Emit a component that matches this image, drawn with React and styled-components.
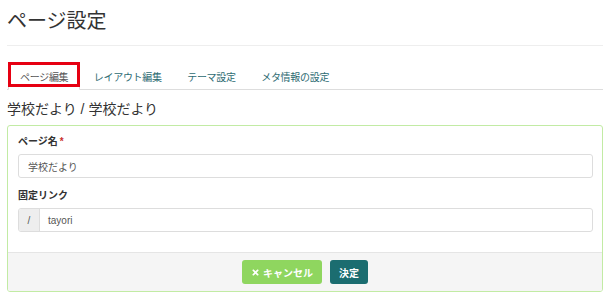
import React from "react";
import styled, { createGlobalStyle } from "styled-components";
import { FaTimes } from "react-icons/fa";

const GlobalStyle = createGlobalStyle`
  html, body {
    margin: 0;
    padding: 0;
    background: #fff;
  }
  body {
    font-family: "Liberation Sans", "Noto Sans CJK JP", sans-serif;
    color: #333;
  }
`;

const Page = styled.div`
  padding: 0 7px;
  width: 596px;
`;

const Title = styled.h1`
  margin: 10px 0 0;
  font-size: 20px;
  line-height: 22px;
  font-weight: 400;
  color: #333;
`;

const Divider = styled.hr`
  margin: 13px 0 0;
  border: 0;
  border-top: 1px solid #eee;
`;

const Tabs = styled.ul`
  display: flex;
  list-style: none;
  margin: 16px 0 0;
  padding: 0 3px 0 1px;
  height: 27px;
  border-bottom: 1px solid #ddd;
`;

const Tab = styled.li`
  position: relative;
  display: flex;
  align-items: center;
  height: 28px;
  padding: 0 10.5px 0 11px;
  margin: 0 2px -1px 0;
  font-size: 10px;
  letter-spacing: -0.3px;
  color: ${(p) => (p.active ? "#555" : "#2d6b72")};
  background: ${(p) => (p.active ? "#fff" : "transparent")};
  border: 1px solid ${(p) => (p.active ? "#ddd" : "transparent")};
  border-bottom-color: transparent;
  border-radius: 3px 3px 0 0;
  box-sizing: border-box;
  white-space: nowrap;
`;

const Marker = styled.span`
  position: absolute;
  left: -1px;
  top: -1px;
  right: -1px;
  height: 25px;
  border: 3px solid #e60012;
  box-sizing: border-box;
`;

const Heading = styled.h2`
  margin: 9px 0 0;
  font-size: 14px;
  line-height: 20px;
  font-weight: 400;
  color: #333;
`;

const Panel = styled.div`
  margin-top: 6px;
  border: 1px solid #c2eba4;
  border-radius: 3px;
  overflow: hidden;
`;

const PanelBody = styled.div`
  padding: 9px 9px 20px 10px;
`;

const Group = styled.div`
  & + & {
    margin-top: 11px;
  }
`;

const Label = styled.label`
  display: block;
  font-size: 10px;
  line-height: 14px;
  font-weight: 700;
  color: #333;
  margin-bottom: 5px;
`;

const Required = styled.span`
  color: #c9302c;
  margin-left: 2px;
`;

const InputRow = styled.div`
  display: flex;
  height: 24px;
  border: 1px solid #ddd;
  border-radius: 3px;
  box-sizing: border-box;
  overflow: hidden;
  background: #fff;
`;

const Addon = styled.span`
  display: flex;
  align-items: center;
  justify-content: center;
  width: 20px;
  background: #eee;
  border-right: 1px solid #ddd;
  font-size: 10px;
  color: #555;
`;

const Field = styled.span`
  display: flex;
  align-items: center;
  flex: 1;
  padding-left: ${(p) => p.pad}px;
  font-size: 10px;
  color: #555;
`;

const Footer = styled.div`
  display: flex;
  justify-content: center;
  gap: 8px;
  padding: 7px 0;
  background: #f5f5f5;
  border-top: 1px solid #e5e5e5;
`;

const Button = styled.button`
  display: flex;
  align-items: center;
  gap: 3px;
  height: 24px;
  padding: 0 9px;
  border: 0;
  border-radius: 3px;
  font-family: inherit;
  font-size: 10px;
  font-weight: 700;
  color: #fff;
  background: ${(p) => p.bg};
`;

export default function App() {
  return (
    <Page>
      <GlobalStyle />
      <Title>ページ設定</Title>
      <Divider />
      <Tabs>
        <Tab active>
          ページ編集
          <Marker />
        </Tab>
        <Tab>レイアウト編集</Tab>
        <Tab>テーマ設定</Tab>
        <Tab>メタ情報の設定</Tab>
      </Tabs>
      <Heading>学校だより / 学校だより</Heading>
      <Panel>
        <PanelBody>
          <Group>
            <Label>
              ページ名<Required>*</Required>
            </Label>
            <InputRow>
              <Field pad={9}>学校だより</Field>
            </InputRow>
          </Group>
          <Group>
            <Label>固定リンク</Label>
            <InputRow>
              <Addon>/</Addon>
              <Field pad={8}>tayori</Field>
            </InputRow>
          </Group>
        </PanelBody>
        <Footer>
          <Button bg="#8fd65f">
            <FaTimes size={9} />
            キャンセル
          </Button>
          <Button bg="#1b6d70">決定</Button>
        </Footer>
      </Panel>
    </Page>
  );
}
